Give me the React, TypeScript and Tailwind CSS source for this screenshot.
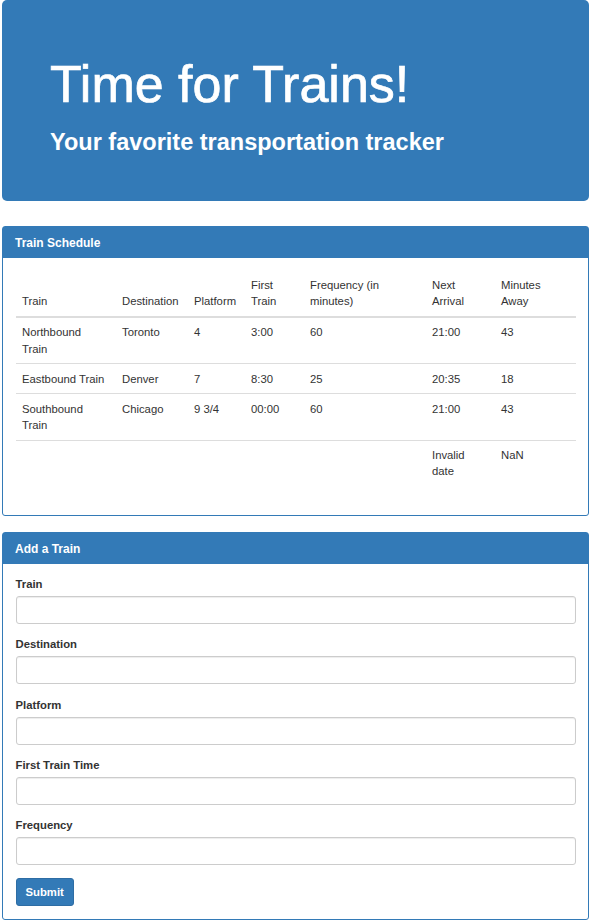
import React from "react";

const rows = [
  ["Northbound Train", "Toronto", "4", "3:00", "60", "21:00", "43"],
  ["Eastbound Train", "Denver", "7", "8:30", "25", "20:35", "18"],
  ["Southbound Train", "Chicago", "9 3/4", "00:00", "60", "21:00", "43"],
  ["", "", "", "", "", "Invalid date", "NaN"],
];

const headers = ["Train", "Destination", "Platform", "First Train", "Frequency (in minutes)", "Next Arrival", "Minutes Away"];
const widths = [100, 72, 57, 59, 122, 69, 81];

const fields = ["Train", "Destination", "Platform", "First Train Time", "Frequency"];

export default function App() {
  return (
    <div className="bg-white text-[#333] pl-[2px] pr-[5px] pb-[4px]" style={{ fontFamily: '"Liberation Sans", Arial, sans-serif' }}>
      <div className="bg-[#337ab7] rounded-[5px] pt-[40px] pb-[46px] px-[48px] text-white mb-[25px]">
        <h1 className="mt-[16px] text-[52px] leading-[57px] font-normal [-webkit-text-stroke:0.7px_white]">Time for Trains!</h1>
        <h3 className="mt-[16px] text-[23.5px] leading-[26px] font-bold">Your favorite transportation tracker</h3>
      </div>

      <div className="border border-[#337ab7] rounded-[3px] mb-[16px]">
        <div className="bg-[#337ab7] text-white text-[12px] leading-[14px] font-bold px-[12px] pt-[9px] pb-[8px]">Train Schedule</div>
        <div className="px-[12.5px] pt-[12.5px] pb-[12px]">
          <table className="w-full table-fixed border-collapse text-[11.3px] leading-[16.4px] mb-[16.5px]">
            <colgroup>
              {widths.map((w, i) => (
                <col key={i} style={{ width: w }} />
              ))}
            </colgroup>
            <thead>
              <tr>
                {headers.map((h) => (
                  <th key={h} className="text-left font-normal align-bottom px-[6.5px] py-[6.3px] border-b-2 border-[#ddd]">
                    {h}
                  </th>
                ))}
              </tr>
            </thead>
            <tbody>
              {rows.map((r, i) => (
                <tr key={i} className={i > 0 ? "border-t border-[#ddd]" : ""}>
                  {r.map((c, j) => (
                    <td key={j} className="align-top px-[6.5px] py-[6.3px]">
                      {c}
                    </td>
                  ))}
                </tr>
              ))}
            </tbody>
          </table>
        </div>
      </div>

      <div className="border border-[#337ab7] rounded-[3px]">
        <div className="bg-[#337ab7] text-white text-[12px] leading-[14px] font-bold px-[12px] pt-[9px] pb-[8px]">Add a Train</div>
        <div className="px-[12.5px] pt-[12.5px] pb-[13px]">
          {fields.map((f) => (
            <div key={f} className="mb-[12.3px]">
              <label className="block text-[11.3px] leading-[16px] font-bold mb-[4px]">{f}</label>
              <input
                type="text"
                className="block w-full h-[28px] border border-[#ccc] rounded-[3px] bg-white shadow-[inset_0_1px_1px_rgba(0,0,0,0.075)] outline-none"
              />
            </div>
          ))}
          <button className="bg-[#337ab7] border border-[#2e6da4] rounded-[3px] text-white text-[11.3px] leading-[16px] font-bold px-[9px] py-[5px]">
            Submit
          </button>
        </div>
      </div>
    </div>
  );
}
